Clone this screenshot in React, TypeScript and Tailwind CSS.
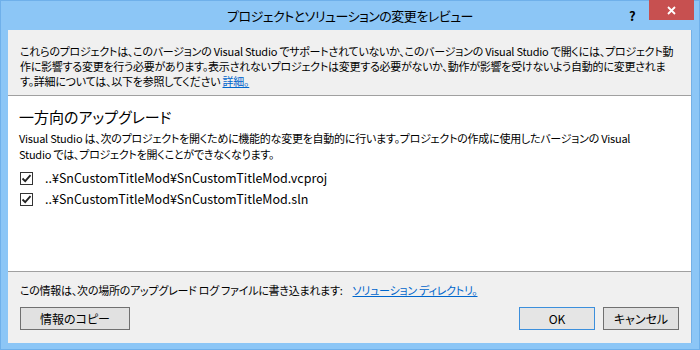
import React from "react"

const font = "font-['Noto_Sans_CJK_JP',sans-serif] [font-feature-settings:'palt']"
const body = "text-[11px] tracking-[-0.25px] text-black"

function CheckRow({ label }: { label: string }) {
  return (
    <div className="flex items-center h-[21px]">
      <span className="flex items-center justify-center w-[13px] h-[13px] border border-[#333333] bg-white">
        <svg width="11" height="11" viewBox="0 0 11 11" aria-hidden>
          <path d="M1.5 5.5 L4.2 8.2 L9.5 2.2" fill="none" stroke="#222" strokeWidth="1.8" />
        </svg>
      </span>
      <span className="ml-[12px] text-[12.5px] text-black">{label}</span>
    </div>
  )
}

function Btn({ children, className }: { children: React.ReactNode; className: string }) {
  return (
    <button className={`h-[23px] bg-[#e1e1e1] border text-[12px] text-black flex items-center justify-center ${className}`}>
      {children}
    </button>
  )
}

export default function App() {
  return (
    <div className={`w-[700px] h-[350px] bg-[#8cc6f6] border border-[#6fb0ea] flex flex-col ${font}`}>
      {/* title bar */}
      <div className="h-[29px] flex items-start relative">
        <div className="flex-1 text-center text-[13px] tracking-[-0.5px] text-black leading-[29px]">
          プロジェクトとソリューションの変更をレビュー
        </div>
        <span className="absolute left-[628px] top-[5px] text-[13px] font-bold text-black">?</span>
        <span className="absolute left-[648px] top-[-1px] w-[45px] h-[20px] bg-[#c75050] flex items-center justify-center">
          <svg width="9" height="9" viewBox="0 0 9 9" aria-hidden>
            <path d="M1 1 L8 8 M8 1 L1 8" stroke="white" strokeWidth="1.8" />
          </svg>
        </span>
      </div>

      {/* client area */}
      <div className="mx-[7px] mb-[6px] flex-1 flex flex-col bg-[#f0f0f0] border-r border-[#74b0e6]">
        <div className={`h-[66px] pt-[14px] px-[12px] leading-[15px] border-b border-[#a0a0a0] ${body}`}>
          <div className="whitespace-nowrap">これらのプロジェクトは、このバージョンの Visual Studio でサポートされていないか、このバージョンの Visual Studio で開くには、プロジェクト動</div>
          <div className="whitespace-nowrap">作に影響する変更を行う必要があります。表示されないプロジェクトは変更する必要がないか、動作が影響を受けないよう自動的に変更されま</div>
          <div className="whitespace-nowrap">
            す。詳細については、以下を参照してください <span className="text-[#0066cc] underline">詳細。</span>
          </div>
        </div>

        <div className="h-[176px] bg-white px-[11px] pt-[10px] border-b border-[#a0a0a0]">
          <div className="text-[15px] leading-[22px] text-black">一方向のアップグレード</div>
          <div className={`mt-[2px] leading-[16px] ${body}`}>
            <div className="whitespace-nowrap">Visual Studio は、次のプロジェクトを開くために機能的な変更を自動的に行います。プロジェクトの作成に使用したバージョンの Visual</div>
            <div className="whitespace-nowrap">Studio では、プロジェクトを開くことができなくなります。</div>
          </div>
          <div className="mt-[6px] pl-[1px]">
            <CheckRow label="..¥SnCustomTitleMod¥SnCustomTitleMod.vcproj" />
            <CheckRow label="..¥SnCustomTitleMod¥SnCustomTitleMod.sln" />
          </div>
        </div>

        <div className="flex-1 px-[12px] pt-[10px]">
          <div className={`leading-[16px] whitespace-nowrap ${body}`}>
            この情報は、次の場所のアップグレード ログ ファイルに書き込まれます:
            <span className="ml-[10px] text-[#0066cc] underline">ソリューション ディレクトリ。</span>
          </div>
          <div className="mt-[9px] flex items-center">
            <Btn className="w-[110px] border-[#707070]">情報のコピー</Btn>
            <div className="flex-1" />
            <Btn className="w-[76px] border-[#3c8fdc] bg-[#e5e5e5]">OK</Btn>
            <Btn className="ml-[8px] w-[76px] border-[#707070]">キャンセル</Btn>
          </div>
        </div>
      </div>
    </div>
  )
}
